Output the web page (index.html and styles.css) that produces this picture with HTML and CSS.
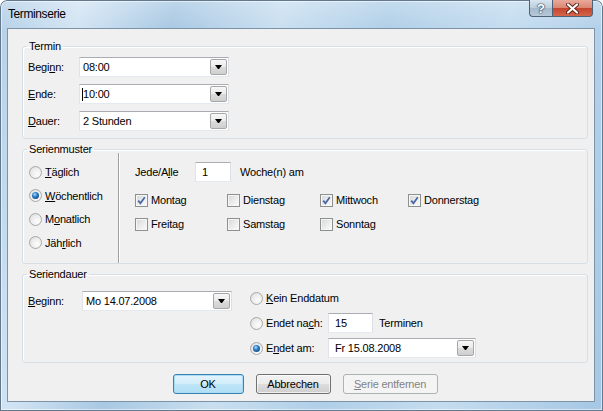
FILE: index.html
```html
<!DOCTYPE html>
<html lang="de">
<head>
<meta charset="utf-8">
<title>Terminserie</title>
<link rel="stylesheet" href="styles.css">
</head>
<body>
<div class="window">
  <div class="titlebar">
    <span class="title">Terminserie</span>
    <div class="caption-buttons">
      <span class="cbtn help">?</span>
      <span class="cbtn close">
        <svg width="13" height="11" viewBox="0 0 13 11"><path d="M2 1.5 L11 9.5 M11 1.5 L2 9.5" stroke="#5b2218" stroke-width="4" stroke-linecap="round" fill="none"/><path d="M2 1.5 L11 9.5 M11 1.5 L2 9.5" stroke="#fff" stroke-width="2.2" stroke-linecap="round" fill="none"/></svg>
      </span>
    </div>
  </div>
  <div class="client">
    <fieldset class="group">
      <legend>Termin</legend>
      <div class="rows">
        <div class="row"><span class="lbl w51">Begi<u>n</u>n:</span><div class="combo w150"><span class="val">08:00</span><span class="dd"></span></div></div>
        <div class="row"><span class="lbl w51"><u>E</u>nde:</span><div class="combo w150"><span class="val caret">10:00</span><span class="dd"></span></div></div>
        <div class="row"><span class="lbl w51"><u>D</u>auer:</span><div class="combo w150"><span class="val">2 Stunden</span><span class="dd"></span></div></div>
      </div>
    </fieldset>

    <fieldset class="group mt">
      <legend>Serienmuster</legend>
      <div class="pattern">
        <div class="freq">
          <div class="ritem"><span class="rb"></span><span><u>T</u>äglich</span></div>
          <div class="ritem"><span class="rb on"></span><span><u>W</u>öchentlich</span></div>
          <div class="ritem"><span class="rb"></span><span>M<u>o</u>natlich</span></div>
          <div class="ritem"><span class="rb"></span><span>Jäh<u>r</u>lich</span></div>
        </div>
        <div class="days">
          <div class="every"><span class="w60">Jede/A<u>l</u>le</span><div class="tb w36">1</div><span class="after">Woche(n) am</span></div>
          <div class="daygrid">
            <div class="citem"><span class="cb on"><svg width="9" height="9" viewBox="0 0 9 9"><path d="M1.2 4.6 L3.4 7.2 L7.8 1.2" stroke="#4a68a6" stroke-width="1.8" fill="none"/></svg></span><span>Montag</span></div>
            <div class="citem"><span class="cb"></span><span>Dienstag</span></div>
            <div class="citem"><span class="cb on"><svg width="9" height="9" viewBox="0 0 9 9"><path d="M1.2 4.6 L3.4 7.2 L7.8 1.2" stroke="#4a68a6" stroke-width="1.8" fill="none"/></svg></span><span>Mittwoch</span></div>
            <div class="citem"><span class="cb on"><svg width="9" height="9" viewBox="0 0 9 9"><path d="M1.2 4.6 L3.4 7.2 L7.8 1.2" stroke="#4a68a6" stroke-width="1.8" fill="none"/></svg></span><span>Donnerstag</span></div>
            <div class="citem"><span class="cb"></span><span>Freitag</span></div>
            <div class="citem"><span class="cb"></span><span>Samstag</span></div>
            <div class="citem"><span class="cb"></span><span>Sonntag</span></div>
          </div>
        </div>
      </div>
    </fieldset>

    <fieldset class="group mt">
      <legend>Seriendauer</legend>
      <div class="duration">
        <div class="start"><span class="lbl w54"><u>B</u>eginn:</span><div class="combo w150"><span class="val">Mo 14.07.2008</span><span class="dd"></span></div></div>
        <div class="ends">
          <div class="erow"><div class="ritem"><span class="rb"></span><span><u>K</u>ein Enddatum</span></div></div>
          <div class="erow"><div class="ritem w78"><span class="rb"></span><span>Endet na<u>c</u>h:</span></div><div class="tb w45">15</div><span class="after6">Terminen</span></div>
          <div class="erow"><div class="ritem w78"><span class="rb on"></span><span>E<u>n</u>det am:</span></div><div class="combo w148 pad6"><span class="val">Fr 15.08.2008</span><span class="dd"></span></div></div>
        </div>
      </div>
    </fieldset>

    <div class="buttons">
      <span class="btn default w71">OK</span>
      <span class="btn w75">Abbrechen</span>
      <span class="btn disabled w95"><u>S</u>erie entfernen</span>
    </div>
  </div>
</div>
</body>
</html>
```

FILE: styles.css
```css
html, body {
  margin: 0;
  padding: 0;
}
body {
  width: 603px;
  height: 411px;
  overflow: hidden;
  font-family: "Liberation Sans", Arial, sans-serif;
  font-size: 11px;
  letter-spacing: -0.2px;
  color: #000;
  background: #fff;
}
u {
  text-decoration: underline;
  text-underline-offset: 1px;
}

.window {
  width: 603px;
  height: 411px;
  box-sizing: border-box;
  padding: 0 8px 9px 7px;
  display: flex;
  flex-direction: column;
  border-radius: 7px 7px 0 0;
  background:
    linear-gradient(180deg, rgba(255,255,255,0.25) 0, rgba(255,255,255,0) 30px),
    linear-gradient(100deg, #b4d0e8 0%, #d2e4f3 12%, #a8c8e3 26%, #c9dff0 42%, #b0cfe8 58%, #c4dcef 76%, #a5c7e5 100%);
  box-shadow: inset 0 0 0 1px #62788c, inset 0 0 0 2px rgba(255,255,255,0.55);
}

.titlebar {
  height: 28px;
  display: flex;
  align-items: flex-start;
  flex: none;
}
.title {
  margin: 7px 0 0 1px;
  line-height: 14px;
  font-size: 12px;
  letter-spacing: -0.4px;
  color: #000;
}
.caption-buttons {
  margin-left: auto;
  margin-right: 2px;
  display: flex;
}
.cbtn {
  height: 17px;
  box-sizing: border-box;
  display: flex;
  align-items: center;
  justify-content: center;
  border: 1px solid #4e6275;
  border-top: none;
}
.help {
  width: 23px;
  border-radius: 0 0 0 4px;
  border-right: none;
  background: linear-gradient(180deg, #d9e5ef 0%, #bccddc 50%, #a4b8ca 50%, #b6c9da 100%);
  color: #fff;
  font-weight: bold;
  font-size: 13px;
  letter-spacing: 0;
  text-shadow: 0 0 1px #2f4356, 0 0 1px #2f4356, 0 0 2px #2f4356;
}
.close {
  width: 41px;
  border-radius: 0 0 4px 0;
  background: linear-gradient(180deg, #e9aa9c 0%, #d98671 50%, #c4432d 50%, #d4664a 100%);
}

.client {
  flex: 1;
  box-sizing: border-box;
  border: 1px solid #7d93a7;
  background: #f0f0f0;
  padding: 11px 6px 0 14px;
  display: flex;
  flex-direction: column;
}

.group {
  margin: 0;
  padding: 0;
  min-width: 0;
  border: 1px solid #d5dfe5;
  border-radius: 3px;
  box-shadow: inset 1px 1px 0 #fff;
}
.group.mt {
  margin-top: 4px;
}
.group legend {
  margin-left: 4px;
  padding: 0 2px;
  line-height: 13px;
  font-size: 11px;
}

/* Termin */
.rows {
  display: flex;
  flex-direction: column;
  gap: 7px;
  padding: 4px 0 7px 5px;
}
.row {
  display: flex;
  align-items: center;
  height: 20px;
}
.lbl {
  flex: none;
  line-height: 20px;
}
.w51 { width: 51px; }
.w54 { width: 54px; }
.w60 { width: 60px; flex: none; }
.w36 { width: 36px; }
.w45 { width: 45px; }
.w78 { width: 78px; }
.w150 { width: 150px; }
.w148 { width: 148px; }

.combo {
  height: 20px;
  box-sizing: border-box;
  display: flex;
  align-items: center;
  flex: none;
  border: 1px solid;
  border-color: #abadb3 #dbdfe6 #e3e9ef #e2e3ea;
  background: #fff;
  padding-left: 3px;
}
.combo.pad6 { padding-left: 6px; }
.val {
  line-height: 13px;
}
.val.caret {
  border-left: 1px solid #000;
  margin-left: -1px;
}
.dd {
  margin-left: auto;
  margin-right: 1px;
  width: 17px;
  height: 16px;
  box-sizing: border-box;
  border: 1px solid #a7a7a7;
  border-radius: 2px;
  background: linear-gradient(180deg, #f7f7f7 0%, #ebebeb 50%, #dcdcdc 50%, #cfcfcf 100%);
  display: flex;
  align-items: center;
  justify-content: center;
}
.dd::after {
  content: "";
  width: 1px;
  height: 0;
  border-top: 4px solid #000;
  border-left: 3px solid transparent;
  border-right: 3px solid transparent;
}

.tb {
  height: 20px;
  box-sizing: border-box;
  flex: none;
  border: 1px solid;
  border-color: #abadb3 #dbdfe6 #e3e9ef #e2e3ea;
  background: #fff;
  padding-left: 6px;
  line-height: 18px;
}

/* Serienmuster */
.pattern {
  display: flex;
  height: 107px;
}
.freq {
  width: 95px;
  box-sizing: border-box;
  padding: 8px 0 0 6px;
  display: flex;
  flex-direction: column;
  gap: 7.5px;
}
.ritem {
  display: flex;
  align-items: center;
  gap: 3px;
  height: 16px;
  flex: none;
}
.rb {
  width: 13px;
  height: 13px;
  box-sizing: border-box;
  border-radius: 50%;
  border: 1px solid #a9a9a9;
  background: radial-gradient(circle at 65% 65%, #fdfdfd 0, #ececec 55%, #d2d2d2 100%);
  display: flex;
  align-items: center;
  justify-content: center;
  flex: none;
}
.rb.on::after {
  content: "";
  width: 7px;
  height: 7px;
  border-radius: 50%;
  background: radial-gradient(circle at 40% 35%, #a7dcff 0, #2a7cc7 40%, #0c2f5c 100%);
}

.days {
  flex: 1;
  margin-top: -3px;
  border-left: 1px solid #a0a0a0;
  box-shadow: inset 1px 0 0 #fff;
  padding: 9px 0 0 16px;
}
.every {
  display: flex;
  align-items: center;
  height: 20px;
}
.after { margin-left: 9px; }
.after6 { margin-left: 6px; }
.daygrid {
  margin-top: 10px;
  display: grid;
  grid-template-columns: 92px 93px 88px auto;
  grid-auto-rows: 16px;
  row-gap: 8px;
}
.citem {
  display: flex;
  align-items: center;
  gap: 3px;
}
.cb {
  width: 13px;
  height: 13px;
  box-sizing: border-box;
  border: 1px solid #8e8f8f;
  background: linear-gradient(135deg, #d3d6da 0%, #eeeeee 60%, #fbfbfb 100%);
  box-shadow: inset 0 0 0 1px #f6f6f6;
  display: flex;
  align-items: center;
  justify-content: center;
  flex: none;
}

/* Seriendauer */
.duration {
  display: flex;
  padding: 7px 0 4px 5px;
}
.start {
  display: flex;
  align-items: center;
  height: 20px;
  margin-top: 3px;
}
.ends {
  margin-left: 18px;
  display: flex;
  flex-direction: column;
  gap: 5px;
}
.erow {
  display: flex;
  align-items: center;
  height: 20px;
}

/* Buttons */
.buttons {
  margin-top: 11px;
  display: flex;
  justify-content: center;
  gap: 12px;
}
.btn {
  height: 20px;
  box-sizing: border-box;
  display: flex;
  align-items: center;
  justify-content: center;
  border: 1px solid #707070;
  border-radius: 3px;
  background: linear-gradient(180deg, #f2f2f2 0%, #ebebeb 50%, #dddddd 50%, #cfcfcf 100%);
  box-shadow: inset 0 0 0 1px rgba(255,255,255,0.7);
}
.w71 { width: 71px; }
.w75 { width: 75px; }
.w95 { width: 95px; }
.btn.default {
  border-color: #3c7fb1;
  background: linear-gradient(180deg, #e4f4fc 0%, #d0ecfa 50%, #bfe5f8 50%, #b0def6 100%);
  box-shadow: inset 0 0 0 1px #a9dcf6;
}
.btn.disabled {
  border-color: #adb2b5;
  background: #f4f4f4;
  box-shadow: none;
  color: #838383;
}
```
